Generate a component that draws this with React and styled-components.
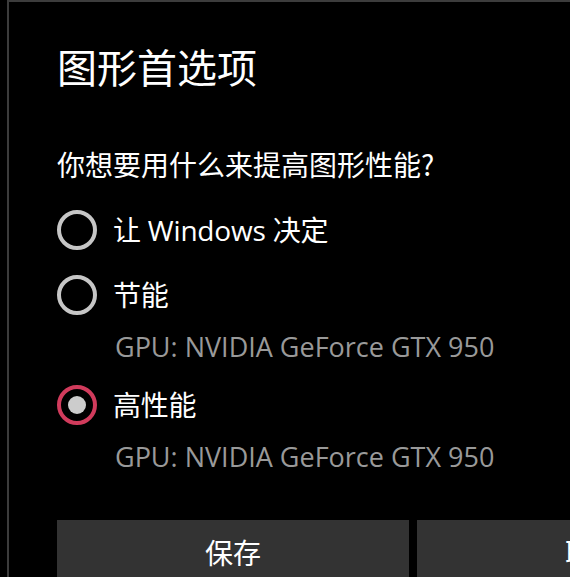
import styled, { createGlobalStyle } from "styled-components";

const GlobalStyle = createGlobalStyle`
  html, body {
    margin: 0;
    padding: 0;
    background: #000;
    overflow: hidden;
  }
  body {
    font-family: "Open Sans", "Noto Sans CJK SC", sans-serif;
  }
`;

const Screen = styled.div`
  width: 570px;
  height: 577px;
  padding-left: 7px;
  box-sizing: border-box;
  background: #000;
  overflow: hidden;
`;

const Dialog = styled.div`
  width: 760px;
  height: 100%;
  box-sizing: border-box;
  padding: 40px 0 0 48px;
  border-left: 2px solid #3c3c3c;
  border-top: 2px solid #3c3c3c;
  color: #fff;
  display: flex;
  flex-direction: column;
`;

const Title = styled.h1`
  margin: 0;
  font-family: "Noto Sans CJK SC", sans-serif;
  font-size: 40px;
  line-height: 48px;
  font-weight: 400;
`;

const Question = styled.p`
  margin: 54px 0 0;
  font-family: "Noto Sans CJK SC", sans-serif;
  font-size: 28px;
  line-height: 40px;
`;

const Options = styled.div`
  display: flex;
  flex-direction: column;
  margin-top: 26px;
`;

const Option = styled.label`
  display: flex;
  align-items: center;
  gap: 16px;
  height: 40px;
  margin-top: ${(p) => p.$gap || 0}px;
`;

const Circle = styled.span`
  width: 40px;
  height: 40px;
  box-sizing: border-box;
  border-radius: 50%;
  border: 4px solid ${(p) => (p.$checked ? "#d13b5c" : "#c6c6c6")};
  display: flex;
  align-items: center;
  justify-content: center;
  flex-shrink: 0;

  &::after {
    content: "";
    display: ${(p) => (p.$checked ? "block" : "none")};
    width: 18px;
    height: 18px;
    border-radius: 50%;
    background: #cccccc;
  }
`;

const Label = styled.span`
  font-size: 28px;
  line-height: 40px;
  letter-spacing: -0.2px;
  color: #fff;
`;

const Detail = styled.div`
  margin: 14px 0 0 58px;
  font-family: "Open Sans", sans-serif;
  font-size: 27px;
  line-height: 36px;
  color: #999999;
`;

const Buttons = styled.div`
  display: flex;
  gap: 8px;
  margin-top: 45px;
`;

const Button = styled.button`
  width: 352px;
  height: 64px;
  flex-shrink: 0;
  border: none;
  background: #333333;
  color: #fff;
  font-family: "Noto Sans CJK SC", sans-serif;
  font-size: 28px;
  padding: 0;
`;

const options = [
  { label: "让 Windows 决定", gap: 0 },
  { label: "节能", gap: 25, detail: "GPU: NVIDIA GeForce GTX 950" },
  { label: "高性能", gap: 20, detail: "GPU: NVIDIA GeForce GTX 950", checked: true },
];

export default function App() {
  return (
    <Screen>
      <GlobalStyle />
      <Dialog>
        <Title>图形首选项</Title>
        <Question>你想要用什么来提高图形性能?</Question>
        <Options>
          {options.map((o) => (
            <div key={o.label}>
              <Option $gap={o.gap}>
                <Circle $checked={o.checked} />
                <Label>{o.label}</Label>
              </Option>
              {o.detail && <Detail>{o.detail}</Detail>}
            </div>
          ))}
        </Options>
        <Buttons>
          <Button>保存</Button>
          <Button>取消</Button>
        </Buttons>
      </Dialog>
    </Screen>
  );
}
